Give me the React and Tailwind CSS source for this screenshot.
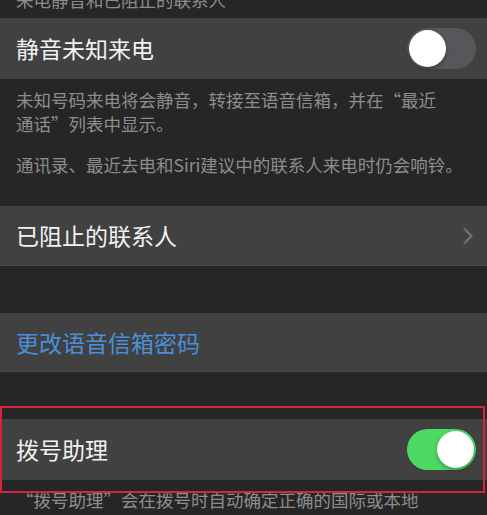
import React from "react";

const font = { fontFamily: '"Noto Sans CJK SC", "Noto Sans", sans-serif' };

function Toggle({ on }) {
  return (
    <div
      className={`relative h-[41px] w-[69px] rounded-full ${on ? "bg-[#4cd964]" : "bg-[#56565b]"}`}
    >
      <div
        className={`absolute top-[2px] h-[37px] w-[37px] rounded-full bg-white shadow-[0_2px_4px_rgba(0,0,0,0.3)] ${on ? "right-[2px]" : "left-[2px]"}`}
      />
    </div>
  );
}

function Row({ children, right, className = "" }) {
  return (
    <div className={`flex items-center justify-between bg-[#414141] pl-4 pr-[11px] ${className}`}>
      {children}
      {right}
    </div>
  );
}

export default function App() {
  return (
    <div className="h-[515px] w-[487px] overflow-hidden bg-[#262626]" style={font}>
      {/* section header, scrolled mostly out of view */}
      <div className="flex h-[18px] items-end overflow-hidden pl-4">
        <div className="text-[17.5px] leading-[24px] text-[#8d8d8f] translate-y-[-6px]">
          来电静音和已阻止的联系人
        </div>
      </div>

      <Row className="h-[61px]" right={<Toggle on={false} />}>
        <span className="text-[23px] text-[#f2f2f2]">静音未知来电</span>
      </Row>

      <div className="pl-4 pr-2 pt-[9px] pb-[29px] text-[17.5px] leading-[24px] text-[#8d8d8f]">
        <p className="whitespace-nowrap">未知号码来电将会静音，转接至语音信箱，并在“最近</p>
        <p>通话”列表中显示。</p>
        <p className="mt-[17px] whitespace-nowrap">
          通讯录、最近去电和Siri建议中的联系人来电时仍会响铃。
        </p>
      </div>

      <Row
        className="h-[60px] border-b border-[#4a4a4a]"
        right={
          <svg width="12" height="18" viewBox="0 0 12 18" className="mr-[2px]">
            <path d="M2.5 2 L9.5 9 L2.5 16" fill="none" stroke="#6e6e70" strokeWidth="2.4" strokeLinecap="round" strokeLinejoin="round" />
          </svg>
        }
      >
        <span className="text-[23px] text-[#f2f2f2]">已阻止的联系人</span>
      </Row>

      <div className="h-[47px]" />

      <Row className="h-[59px] border-b border-[#4a4a4a]">
        <span className="text-[23px] text-[#4a90d9]">更改语音信箱密码</span>
      </Row>

      <div className="relative pt-[47px]">
        <Row className="h-[61px]" right={<Toggle on={true} />}>
          <span className="text-[23px] text-[#f2f2f2]">拨号助理</span>
        </Row>
        <div className="pl-4 pr-2 pt-[8px] text-[17.5px] leading-[24px] text-[#8d8d8f]">
          <p className="whitespace-nowrap">“拨号助理”会在拨号时自动确定正确的国际或本地</p>
          <p>长途前缀。</p>
        </div>
        {/* highlight frame drawn over the dial-assist row */}
        <div className="pointer-events-none absolute left-0 top-[34px] h-[87px] w-[485px] border-2 border-[#d8233e]" />
      </div>
    </div>
  );
}
